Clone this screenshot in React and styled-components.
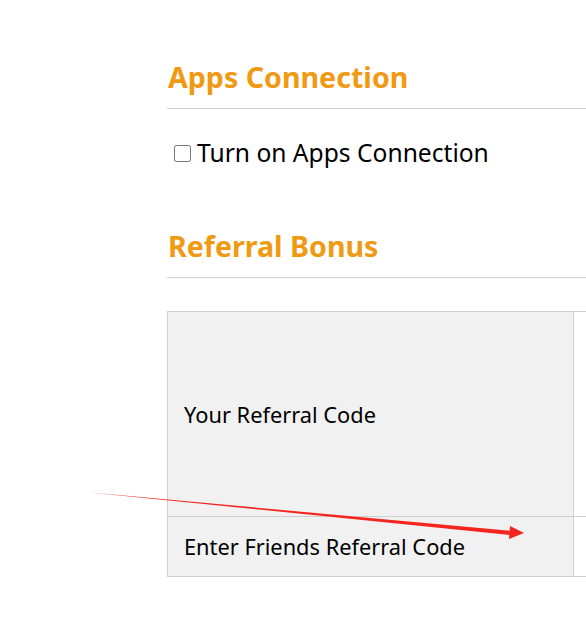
import React from 'react';
import styled, { createGlobalStyle } from 'styled-components';

const GlobalStyle = createGlobalStyle`
  html, body {
    margin: 0;
    padding: 0;
    background: #fff;
    overflow: hidden;
  }
  body {
    font-family: 'Noto Sans', 'Open Sans', sans-serif;
    color: #000;
  }
`;

const orange = '#ef9a12';
const line = '#cfcfcf';

const Page = styled.div`
  position: relative;
  width: 586px;
  height: 620px;
  overflow: hidden;
`;

const Content = styled.div`
  padding: 57px 0 0 167px;
  width: 700px;
`;

const Section = styled.section`
  margin-bottom: ${(p) => p.gap || 0}px;
`;

const Heading = styled.h2`
  margin: 0;
  padding: 0 0 11px 1px;
  font-size: 28.6px;
  font-weight: 700;
  color: ${orange};
  line-height: 40px;
  border-bottom: 1px solid ${line};
`;

const CheckRow = styled.label`
  display: flex;
  align-items: center;
  gap: 6px;
  margin: 27px 0 0 7px;
  font-size: 24.6px;
  line-height: 34px;

  input {
    width: 17px;
    height: 17px;
    margin: 0;
    accent-color: #333;
  }
`;

const Table = styled.div`
  margin-top: 33px;
  display: grid;
  grid-template-columns: 406px 1fr;
  grid-template-rows: 205px 60px;
  border-top: 1px solid ${line};
  border-left: 1px solid ${line};
`;

const Cell = styled.div`
  display: flex;
  align-items: center;
  padding-left: 16px;
  font-size: 21.8px;
  background: ${(p) => (p.head ? '#f1f1f1' : '#fff')};
  border-right: 1px solid ${line};
  border-bottom: 1px solid ${line};
`;

const Arrow = styled.svg`
  position: absolute;
  left: 0;
  top: 0;
  pointer-events: none;
`;

export default function App() {
  return (
    <Page>
      <GlobalStyle />
      <Content>
        <Section gap={56}>
          <Heading>Apps Connection</Heading>
          <CheckRow>
            <input type='checkbox' />
            Turn on Apps Connection
          </CheckRow>
        </Section>
        <Section>
          <Heading>Referral Bonus</Heading>
          <Table>
            <Cell head>Your Referral Code</Cell>
            <Cell />
            <Cell head>Enter Friends Referral Code</Cell>
            <Cell />
          </Table>
        </Section>
      </Content>
      <Arrow width='586' height='620' viewBox='0 0 586 620'>
        <polygon points='85,492 512,531 511,535' fill='#f5241d' />
        <polygon points='510,526 524,533 509,539' fill='#f5241d' />
      </Arrow>
    </Page>
  );
}
